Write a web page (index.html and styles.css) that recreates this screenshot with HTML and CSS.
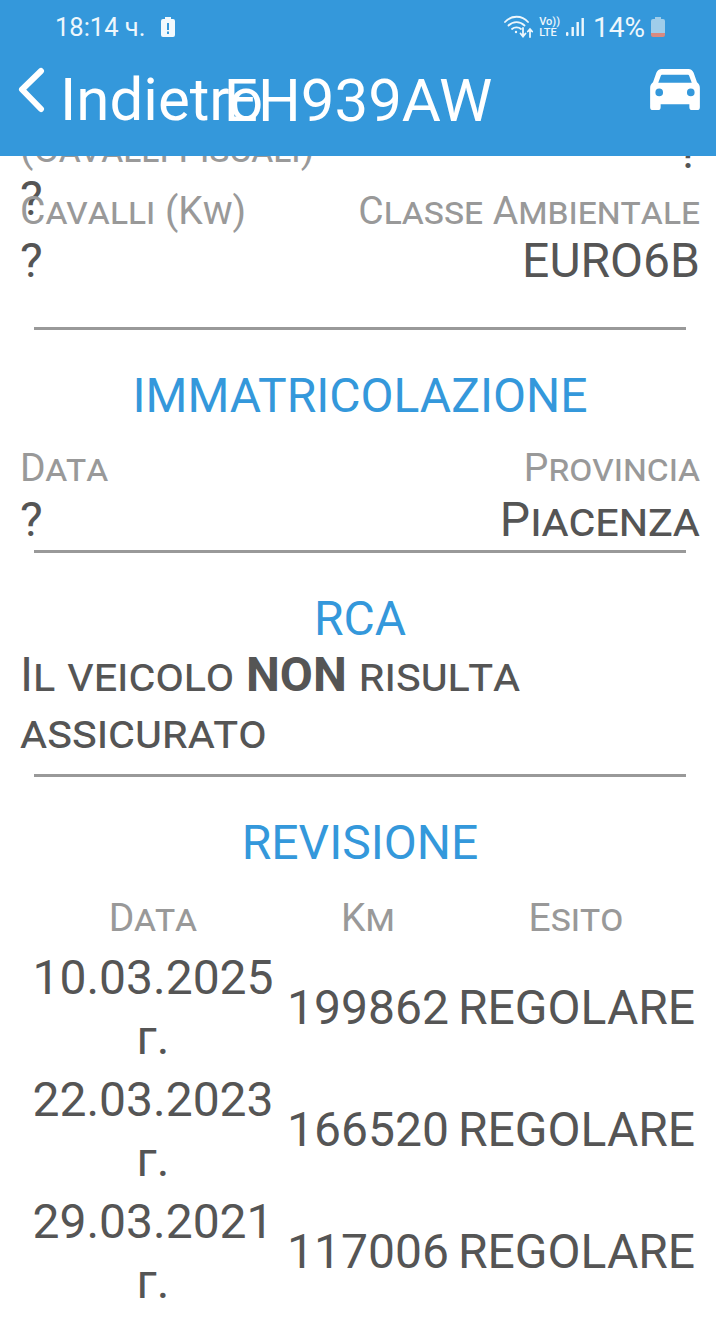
FILE: index.html
```html
<!DOCTYPE html>
<html>
<head>
	<title>Veicolo</title>
	<link rel="stylesheet" href="styles.css">
</head>
<body>
	<div class="header">
		<div class="status">
			<div class="status-left">
				<span class="clock">18:14 ч.</span>
				<svg class="alert-battery" width="16" height="22" viewBox="0 0 16 22">
					<path fill="#f2f9fd" fill-rule="evenodd" d="M5 1h6v2h2a2 2 0 0 1 2 2v14a2 2 0 0 1-2 2H3a2 2 0 0 1-2-2V5a2 2 0 0 1 2-2h2zM7 7v7h2V7zM7 15.500v2.500h2v-2.500z"/>
				</svg>
			</div>
			<div class="status-right">
				<svg width="30" height="26" viewBox="0 0 30 26" fill="none" stroke="#eef7fc" stroke-width="1.800" stroke-linecap="round">
					<path d="M1 8C7 1 18 1 24 8"/>
					<path d="M4.500 11.500C9 7 16 7 20.500 11.500"/>
					<path d="M8 15C10.500 12.800 14.500 12.800 17 15"/>
					<circle cx="12" cy="18" r="1.200" fill="#eef7fc" stroke="none"/>
					<path d="M19 14v8M16.500 19.500L19 22.500l2.500-3M26 23v-8M23.800 17.500L26 15l2.200 2.500"/>
				</svg>
				<div class="volte">
					<span>Vo))</span>
					<span>LTE</span>
				</div>
				<svg class="signal" width="20" height="20" viewBox="0 0 20 20" fill="#eef7fc">
					<rect x="1" y="15" width="2.400" height="4" rx="1"/>
					<rect x="6.500" y="10" width="2.400" height="9"/>
					<rect x="11.500" y="5" width="2.400" height="14"/>
					<rect x="16.500" y="1" width="2.400" height="18"/>
				</svg>
				<span class="percent">14%</span>
				<svg class="battery" width="16" height="22" viewBox="0 0 16 22">
					<path fill="#9fcdea" d="M5 1h6v2h2a2 2 0 0 1 2 2v12H1V5a2 2 0 0 1 2-2h2z"/>
					<path fill="#d98a80" d="M1 17h14v2a2 2 0 0 1-2 2H3a2 2 0 0 1-2-2z"/>
				</svg>
			</div>
		</div>
		<div class="navbar">
			<a class="back">
				<svg width="30" height="48" viewBox="0 0 30 48" fill="none" stroke="#fff" stroke-width="6" stroke-linecap="round" stroke-linejoin="round">
					<path d="M24 4L5 22.500L24 42"/>
				</svg>
				<span class="back-text">Indietro</span>
			</a>
			<span class="plate">EH939AW</span>
			<svg class="car" width="50" height="44" viewBox="0 0 52 46">
				<path fill="#fff" fill-rule="evenodd" d="M12 1h28c2.500 0 4.500 1.500 5.500 4L49 15c2 1.500 3 3.500 3 6v20a3 3 0 0 1-3 3h-5a3 3 0 0 1-3-3v-3H11v3a3 3 0 0 1-3 3H3a3 3 0 0 1-3-3V21c0-2.500 1-4.500 3-6L6.500 5C7.500 2.500 9.500 1 12 1zM13 7c-1 0-1.700.5-2 1.500L8.500 15.500h35L41 8.500C40.700 7.500 40 7 39 7zM9.500 21.500a4 4 0 1 0 0 8a4 4 0 0 0 0-8zM42.500 21.500a4 4 0 1 0 0 8a4 4 0 0 0 0-8z"/>
			</svg>
		</div>
	</div>

	<div class="content">
		<div class="pair clipped">
			<div>
				<div class="label">(Cavalli Fiscali)</div>
				<div class="value">?</div>
			</div>
			<div class="right">
				<div class="value">?</div>
			</div>
		</div>
		<div class="pair overlap">
			<div>
				<div class="label">Cavalli (Kw)</div>
				<div class="value">?</div>
			</div>
			<div class="right">
				<div class="label">Classe Ambientale</div>
				<div class="value">EURO6B</div>
			</div>
		</div>
		<hr class="sep sep-first">

		<h2 class="section">IMMATRICOLAZIONE</h2>
		<div class="pair">
			<div>
				<div class="label">Data</div>
				<div class="value">?</div>
			</div>
			<div class="right">
				<div class="label">Provincia</div>
				<div class="value caps">Piacenza</div>
			</div>
		</div>
		<hr class="sep sep-tight">

		<h2 class="section">RCA</h2>
		<p class="notice">Il veicolo <b>NON</b> risulta assicurato</p>
		<hr class="sep sep-notice">

		<h2 class="section">REVISIONE</h2>
		<div class="revisions">
			<div class="th">Data</div>
			<div class="th">Km</div>
			<div class="th">Esito</div>

			<div class="td">10.03.2025 г.</div>
			<div class="td">199862</div>
			<div class="td">REGOLARE</div>

			<div class="td">22.03.2023 г.</div>
			<div class="td">166520</div>
			<div class="td">REGOLARE</div>

			<div class="td">29.03.2021 г.</div>
			<div class="td">117006</div>
			<div class="td">REGOLARE</div>
		</div>
	</div>
</body>
</html>
```
FILE: styles.css
```css
html {
  box-sizing: border-box;
}

*, *::before, *::after {
  box-sizing: inherit;
  margin: 0;
  padding: 0;
}

body {
  width: 716px;
  height: 1327px;
  overflow: hidden;
  background-color: white;
  font-family: Roboto, sans-serif;
  color: #555;
}

.header {
  position: relative;
  z-index: 2;
  height: 156px;
  background-color: #3498db;
  color: white;
}

.status {
  height: 54px;
  padding: 0 50px 0 55px;
  display: flex;
  justify-content: space-between;
  align-items: center;
}

.status-left,
.status-right {
  display: flex;
  align-items: center;
}

.clock {
  font-size: 25.500px;
  color: #eef7fc;
}

.alert-battery {
  margin-left: 15px;
}

.status-right {
  gap: 5px;
}

.volte {
  display: flex;
  flex-direction: column;
  font-size: 11px;
  line-height: 11px;
  font-weight: 500;
  color: #eef7fc;
}

.signal {
  margin-right: 3px;
}

.percent {
  font-size: 28px;
  color: #eef7fc;
}

.navbar {
  position: relative;
  height: 102px;
  display: flex;
  align-items: center;
  justify-content: center;
}

.back {
  position: absolute;
  left: 17px;
  top: 12px;
  display: flex;
  align-items: flex-start;
}

.back svg {
  margin-top: 1px;
}

.back-text {
  margin-left: 13px;
  font-size: 60px;
  line-height: 68px;
}

.plate {
  font-size: 60px;
  line-height: 68px;
  margin-top: -8px;
}

.car {
  position: absolute;
  right: 16px;
  top: 14px;
}

.content {
  margin-top: -32px;
  padding: 0 16px 0 20px;
}

.pair {
  display: flex;
  justify-content: space-between;
}

.right {
  text-align: right;
}

.label {
  font-size: 39px;
  line-height: 50px;
  font-variant: small-caps;
  color: #999;
}

.value {
  font-size: 48px;
  line-height: 54px;
}

.caps {
  font-variant: small-caps;
}

.clipped .value {
  line-height: 50px;
}

.clipped .right {
  padding-top: 3px;
}

.overlap {
  margin-top: -36px;
}

.overlap .label {
  line-height: 46px;
}

.sep {
  height: 3px;
  border: 0;
  margin-left: 14px;
  margin-right: 14px;
  background-color: #999;
}

.sep-first {
  margin-top: 39px;
}

.sep-tight {
  margin-top: 3px;
}

.sep-notice {
  margin-top: 14px;
}

.section {
  font-size: 48px;
  line-height: 56px;
  font-weight: 400;
  text-align: center;
  color: #3498db;
  margin-top: 38px;
  margin-bottom: 19px;
}

.notice {
  font-size: 48px;
  line-height: 57px;
  font-variant: small-caps;
  margin-top: -20px;
  width: 560px;
}

.revisions {
  display: grid;
  grid-template-columns: 250px 180px 236px;
  row-gap: 2px;
  margin-left: 8px;
  text-align: center;
}

.th {
  font-size: 39px;
  line-height: 56px;
  font-variant: small-caps;
  color: #999;
}

.td {
  font-size: 48px;
  line-height: 60px;
  align-self: center;
}
```
